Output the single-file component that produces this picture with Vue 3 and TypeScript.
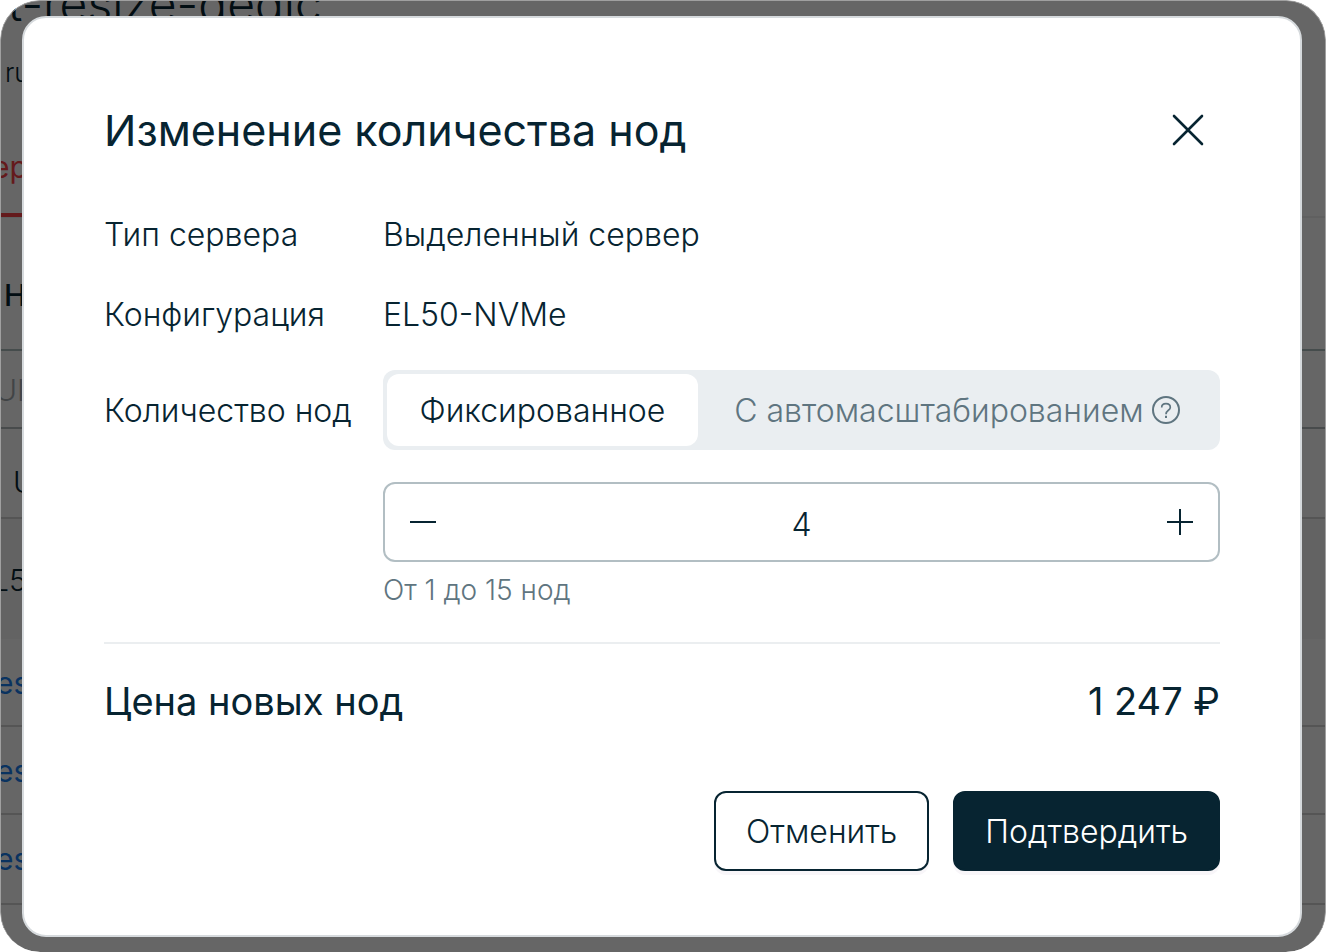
<script setup lang="ts">
import { ref } from 'vue'

type Mode = 'fixed' | 'auto'

const minNodes = 1
const maxNodes = 15
const mode = ref<Mode>('fixed')
const nodes = ref(4)
const price = '1 247 ₽'

function step(delta: number) {
  nodes.value = Math.min(maxNodes, Math.max(minNodes, Number(nodes.value) + delta))
}
</script>

<template>
  <div class="page">
    <div class="backdrop" aria-hidden="true">
      <div class="cluster-name">t-resize-dedic</div>
      <div class="region">ru</div>
      <div class="tabs"><span class="tab">ер</span></div>
      <div class="row group">Н</div>
      <div class="row columns">UI</div>
      <div class="row ident">U</div>
      <div class="row config">L5</div>
      <div class="row node">es</div>
      <div class="row node">es</div>
      <div class="row node last">es</div>
    </div>
    <div class="shade"></div>

    <main class="dialog" role="dialog" aria-modal="true" aria-labelledby="dialog-title">
      <header class="head">
        <h1 id="dialog-title" class="title">Изменение количества нод</h1>
        <button class="close" type="button" aria-label="Закрыть">
          <svg width="32" height="32" viewBox="0 0 32 32" fill="none" stroke="currentColor" stroke-width="2.6" stroke-linecap="round">
            <path d="M2 2L30 30M30 2L2 30" />
          </svg>
        </button>
      </header>

      <form class="form" @submit.prevent>
        <span class="label">Тип сервера</span>
        <span class="value">Выделенный сервер</span>

        <span class="label">Конфигурация</span>
        <span class="value">EL50-NVMe</span>

        <label class="label tall" for="node-count">Количество нод</label>
        <div class="controls">
          <div class="segments" role="radiogroup" aria-label="Количество нод">
            <label class="segment fixed">
              <input v-model="mode" class="radio" type="radio" name="mode" value="fixed" />
              <span class="segment-face">Фиксированное</span>
            </label>
            <label class="segment auto">
              <input v-model="mode" class="radio" type="radio" name="mode" value="auto" />
              <span class="segment-face">
                С автомасштабированием
                <svg class="help" width="28" height="28" viewBox="0 0 28 28" fill="none" stroke="currentColor" stroke-width="2">
                  <circle cx="14" cy="14" r="13" />
                  <path d="M9.7 11.4C9.7 9 11.6 7.7 14 7.7C16.5 7.7 18.3 9.2 18.3 11.4C18.3 14.4 14 14.2 14 18.2" stroke-width="1.7" />
                  <path d="M14 19.8V22" />
                </svg>
              </span>
            </label>
          </div>

          <div class="stepper">
            <button class="step" type="button" aria-label="Уменьшить" @click="step(-1)">
              <svg width="26" height="26" viewBox="0 0 26 26" stroke="currentColor" stroke-width="2"><path d="M0 13H26" /></svg>
            </button>
            <input id="node-count" v-model="nodes" class="count" type="text" inputmode="numeric" />
            <button class="step" type="button" aria-label="Увеличить" @click="step(1)">
              <svg width="26" height="26" viewBox="0 0 26 26" stroke="currentColor" stroke-width="2"><path d="M0 13H26M13 0V26" /></svg>
            </button>
          </div>
          <p class="hint">От {{ minNodes }} до {{ maxNodes }} нод</p>
        </div>
      </form>

      <div class="total">
        <span>Цена новых нод</span>
        <span>{{ price }}</span>
      </div>

      <footer class="actions">
        <button class="action cancel" type="button">Отменить</button>
        <button class="action confirm" type="button">Подтвердить</button>
      </footer>
    </main>
  </div>
</template>

<style>
body {
  background: #fff;
}
</style>

<style scoped>
.page,
.page * {
  box-sizing: border-box;
}

.page {
  position: relative;
  min-height: 100vh;
  padding: 16px 24px 15px 22px;
  border-radius: 40px;
  overflow: hidden;
  font-family: Inter, "Noto Sans", sans-serif;
  font-size: 32px;
  font-weight: 300;
  color: #072431;
}

.backdrop {
  position: absolute;
  inset: 0;
  overflow: hidden;
  background: #fff;
  font-size: 30px;
  white-space: nowrap;
}

.cluster-name {
  height: 42px;
  padding-left: 8px;
  font-size: 48px;
  line-height: 8px;
}

.region {
  height: 90px;
  padding-left: 5px;
  font-size: 26px;
  line-height: 62px;
}

.tabs {
  height: 86px;
  border-bottom: 2px solid #f0f0f0;
}

.tab {
  display: block;
  width: 80px;
  height: 85px;
  margin-left: -8px;
  border-bottom: 4px solid #fb4147;
  color: #fb4147;
  font-weight: 400;
  line-height: 70px;
}

.row {
  height: 88px;
  border-bottom: 2px solid #d4d4d4;
  line-height: 88px;
}

.row.group {
  height: 133px;
  padding-left: 4px;
  border-color: #adbdbf;
  font-weight: 500;
  line-height: 154px;
}

.row.columns {
  height: 78px;
  margin-left: -5px;
  border-color: #b4bbbd;
  color: #a3abae;
  line-height: 78px;
}

.row.ident {
  height: 90px;
  padding-left: 13px;
  line-height: 106px;
}

.row.config {
  height: 120px;
  margin-left: -8px;
  border-color: #f7f7f7;
  background: #f7f7f7;
  line-height: 122px;
}

.row.node {
  margin-left: -4px;
  color: #1a80f0;
  font-weight: 400;
}

.row.last {
  height: 90px;
}

.shade {
  position: absolute;
  inset: 0;
  border: solid #a0a0a0;
  border-width: 1px 1px 0;
  border-radius: 40px;
  background: rgba(0, 0, 0, 0.6);
}

.dialog {
  position: relative;
  padding: 84px 80px 64px;
  border: 2px solid #d6dadd;
  border-radius: 24px;
  background: #fff;
}

.head {
  display: flex;
  align-items: center;
  justify-content: space-between;
  margin-bottom: 52px;
}

.title {
  margin: 0;
  font-size: 43px;
  font-weight: 400;
  line-height: 58px;
}

button {
  font: inherit;
  color: inherit;
  cursor: pointer;
}

.close {
  display: flex;
  align-items: center;
  justify-content: center;
  width: 64px;
  height: 56px;
  padding: 0;
  border: 0;
  background: none;
}

.head {
  height: 56px;
}

.form {
  display: grid;
  grid-template-columns: 279px 1fr;
  row-gap: 30px;
  padding-bottom: 30px;
  border-bottom: 2px solid #ebeef0;
}

.label,
.value {
  line-height: 50px;
  white-space: nowrap;
}

.label.tall {
  line-height: 82px;
}

.controls {
  min-width: 0;
}

.segments {
  display: flex;
  height: 80px;
  padding: 4px;
  border-radius: 12px;
  background: #eaeef1;
}

.segment {
  position: relative;
  min-width: 0;
  cursor: pointer;
}

.segment.fixed {
  flex: 3 1 0;
}

.segment.auto {
  flex: 5 1 0;
}

.radio {
  position: absolute;
  inset: 0;
  margin: 0;
  opacity: 0;
}

.segment-face {
  display: flex;
  align-items: center;
  justify-content: center;
  gap: 8px;
  height: 72px;
  border-radius: 12px;
  color: #5f7580;
  white-space: nowrap;
}

.radio:checked + .segment-face {
  background: #fff;
  color: #072431;
}

.help {
  flex: none;
}

.stepper {
  display: flex;
  height: 80px;
  margin-top: 32px;
  border: 2px solid #b2bec3;
  border-radius: 12px;
}

.step {
  display: flex;
  align-items: center;
  justify-content: center;
  width: 76px;
  padding: 0;
  border: 0;
  background: none;
}

.count {
  flex: 1;
  min-width: 0;
  padding: 4px 0 0;
  border: 0;
  outline: 0;
  background: none;
  color: inherit;
  font: inherit;
  text-align: center;
}

.hint {
  margin: 8px 0 0;
  padding-bottom: 2px;
  color: #5f7580;
  font-size: 28px;
  line-height: 40px;
}

.total {
  display: flex;
  justify-content: space-between;
  margin: 30px 0 63px;
  font-size: 38px;
  font-weight: 400;
  line-height: 54px;
}

.actions {
  display: flex;
  justify-content: flex-end;
  gap: 24px;
}

.action {
  height: 80px;
  padding: 0 30px;
  border: 2px solid #072431;
  border-radius: 12px;
  box-shadow: 0 4px 0 #f8f6f9;
}

.cancel {
  background: #fff;
}

.confirm {
  background: #072431;
  color: #fff;
}
</style>
